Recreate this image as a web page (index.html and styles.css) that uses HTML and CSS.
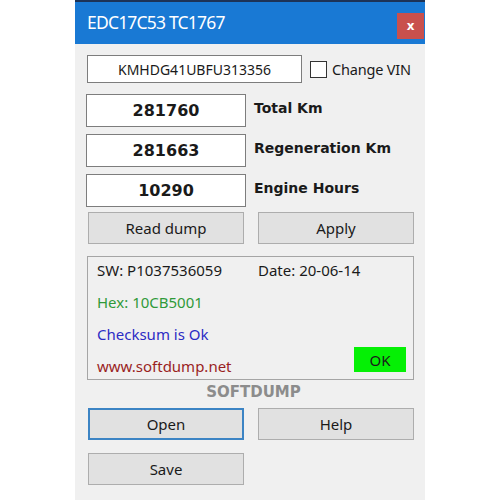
FILE: index.html
```html
<!DOCTYPE html>
<html lang="en">
<head>
  <meta charset="UTF-8">
  <title>EDC17C53 TC1767</title>
  <link rel="stylesheet" href="styles.css">
</head>
<body>
  <div class="window">
    <div class="titlebar">
      <span class="title">EDC17C53 TC1767</span>
      <span class="close">x</span>
    </div>

    <div class="content">
      <div class="vin-row">
        <div class="box vin">KMHDG41UBFU313356</div>
        <label class="check"><span class="tick"></span>Change VIN</label>
      </div>

      <div class="field">
        <div class="box num">281760</div>
        <span class="label">Total Km</span>
      </div>
      <div class="field">
        <div class="box num">281663</div>
        <span class="label">Regeneration Km</span>
      </div>
      <div class="field">
        <div class="box num">10290</div>
        <span class="label">Engine Hours</span>
      </div>

      <div class="btn-row first">
        <div class="btn">Read dump</div>
        <div class="btn">Apply</div>
      </div>

      <div class="group">
        <div class="line top">
          <span class="sw">SW: P1037536059</span>
          <span>Date: 20-06-14</span>
        </div>
        <div class="line hex">Hex: 10CB5001</div>
        <div class="line sum">Checksum is Ok</div>
        <div class="line last">
          <span class="site">www.softdump.net</span>
          <span class="ok">OK</span>
        </div>
      </div>

      <div class="brand">SOFTDUMP</div>

      <div class="btn-row">
        <div class="btn focus">Open</div>
        <div class="btn">Help</div>
      </div>
      <div class="btn-row save">
        <div class="btn">Save</div>
      </div>
    </div>
  </div>
</body>
</html>
```

FILE: styles.css
```css
html, body {
  margin: 0;
  padding: 0;
  background: #fff;
}
body {
  font-family: "Noto Sans", "Liberation Sans", sans-serif;
  font-size: 15px;
  color: #1a1a1a;
}
.window {
  width: 350px;
  height: 500px;
  margin: 0 auto;
  border-top: 2px solid #1d3357;
  box-sizing: border-box;
  background: #f0f0f0;
}
.titlebar {
  height: 42px;
  background: #1979d4;
  display: flex;
  justify-content: space-between;
  align-items: flex-start;
  padding-left: 12px;
  padding-right: 1px;
}
.title {
  color: #fff;
  font-size: 17.5px;
  line-height: 22px;
  margin-top: 9px;
  letter-spacing: -0.8px;
}
.close {
  width: 27px;
  height: 26px;
  margin-top: 11px;
  background: #c9504d;
  color: #fff;
  font-family: "DejaVu Sans", sans-serif;
  font-weight: bold;
  font-size: 12px;
  display: flex;
  align-items: center;
  justify-content: center;
}
.content {
  padding: 11px 11px 0 12px;
}
.box {
  background: #fff;
  border: 1px solid #7d7d7d;
  box-sizing: border-box;
  display: flex;
  align-items: center;
  justify-content: center;
}
.vin-row {
  display: flex;
  align-items: center;
  height: 28px;
}
.vin {
  width: 215px;
  height: 28px;
  flex-shrink: 0;
  font-size: 14px;
}
.check {
  display: flex;
  align-items: center;
  margin-left: 8px;
  font-size: 14.5px;
  white-space: nowrap;
  letter-spacing: -0.2px;
}
.tick {
  width: 17px;
  height: 17px;
  flex-shrink: 0;
  border: 1px solid #333;
  box-sizing: border-box;
  background: #fff;
  margin-right: 5px;
}
.field {
  display: flex;
  align-items: center;
  margin-top: 7px;
}
.vin-row + .field {
  margin-top: 11px;
}
.num {
  width: 160px;
  height: 33px;
  margin-left: -1px;
  font-family: "DejaVu Sans", sans-serif;
  font-weight: bold;
  font-size: 16px;
}
.label {
  margin-left: 8px;
  font-family: "DejaVu Sans", sans-serif;
  font-weight: bold;
  font-size: 14px;
  margin-top: -6px;
}
.btn-row {
  display: flex;
  gap: 14px;
  margin-left: 1px;
}
.btn-row.first {
  margin-top: 5px;
}
.btn {
  width: 156px;
  height: 32px;
  box-sizing: border-box;
  background: #e1e1e1;
  border: 1px solid #adadad;
  display: flex;
  align-items: center;
  justify-content: center;
  font-size: 15px;
}
.btn.focus {
  border: 2px solid #3c84c4;
}
.btn-row.save {
  margin-top: 13px;
}
.group {
  margin-top: 12px;
  height: 124px;
  box-sizing: border-box;
  border: 1px solid #a5a5a5;
  padding: 0 7px 0 9px;
}
.line {
  display: flex;
  align-items: center;
  height: 32px;
}
.line.top {
  margin-top: -3px;
}
.sw {
  width: 161px;
}
.hex {
  color: #2f9a3a;
}
.sum {
  color: #2c2cc4;
}
.last {
  justify-content: space-between;
}
.site {
  color: #9a1f1f;
}
.ok {
  width: 52px;
  height: 25px;
  background: #05f005;
  display: flex;
  align-items: center;
  justify-content: center;
  margin-top: -13px;
}
.brand {
  text-align: center;
  font-family: "DejaVu Sans", sans-serif;
  font-weight: bold;
  font-size: 15px;
  color: #8c8c8c;
  height: 28px;
  line-height: 24px;
  margin-left: 6px;
}
```
